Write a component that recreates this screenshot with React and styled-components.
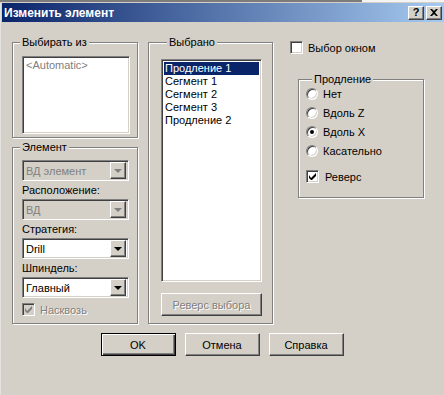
import styled, { createGlobalStyle, css } from "styled-components"

const GlobalStyle = createGlobalStyle`
  html, body {
    margin: 0;
    padding: 0;
    background: #d4d0c8;
  }
  body {
    font-family: "Liberation Sans", Arial, sans-serif;
    font-size: 11px;
    color: #000;
  }
  * { box-sizing: border-box; }
`

const sunken = css`
  border: 1px solid;
  border-color: #808080 #fff #fff #808080;
  box-shadow: inset 1px 1px 0 #404040, inset -1px -1px 0 #d4d0c8;
`
const raised = css`
  border: 1px solid;
  border-color: #fff #404040 #404040 #fff;
  box-shadow: inset -1px -1px 0 #808080;
`

const Window = styled.div`
  width: 444px;
  height: 395px;
  background: #d4d0c8;
  box-shadow: inset 1px 0 0 #e4e2de;
  overflow: hidden;
`
const TopStrip = styled.div`
  height: 3px;
  background:
    linear-gradient(180deg, transparent 0 2px, #d4d0c8 2px),
    linear-gradient(90deg, #7c7c7c 0 362px, #f4f4f4 362px);
`
const TitleBar = styled.div`
  height: 19px;
  margin: 0 0 0 2px;
  padding: 0 2px 0 2px;
  display: flex;
  align-items: center;
  background: linear-gradient(90deg, #0a246a, #a6caf0);
`
const Title = styled.span`
  flex: 1;
  color: #fff;
  font-weight: bold;
  font-size: 12px;
`
const CaptionButton = styled.div`
  width: 16px;
  height: 14px;
  margin-left: ${p => p.$gap || 0}px;
  background: #d4d0c8;
  ${raised};
  display: flex;
  align-items: center;
  justify-content: center;
  font-weight: bold;
  font-size: 11px;
  line-height: 1;
`

const Body = styled.div`
  padding: 20px 0 0 12px;
`
const Columns = styled.div`
  display: flex;
  align-items: flex-start;
`
const Column = styled.div`
  display: flex;
  flex-direction: column;
  margin-left: ${p => p.$left || 0}px;
  margin-top: ${p => p.$top || 0}px;
`
const Frame = styled.div`
  width: ${p => p.$w}px;
  height: ${p => p.$h}px;
  margin-top: ${p => p.$top || 0}px;
  margin-left: ${p => p.$left || 0}px;
  padding-left: ${p => p.$pad || 9}px;
  border: 1px solid #808080;
  box-shadow: inset 1px 1px 0 #fff, 1px 1px 0 #fff;
  display: flex;
  flex-direction: column;
  align-items: flex-start;
`
const Legend = styled.span`
  display: block;
  height: 13px;
  line-height: 13px;
  margin: -7px 0 0 ${p => p.$left}px;
  padding: 0 2px;
  background: #d4d0c8;
  white-space: nowrap;
`
const ListBox = styled.div`
  width: ${p => p.$w}px;
  height: ${p => p.$h}px;
  margin-top: ${p => p.$top}px;
  background: #fff;
  ${sunken};
  padding: 2px;
`
const ListItem = styled.div`
  height: 13px;
  line-height: 13px;
  padding-left: 1px;
  white-space: nowrap;
  color: ${p => (p.$muted ? "#808080" : p.$selected ? "#fff" : "#000")};
  background: ${p => (p.$selected ? "#0a246a" : "transparent")};
`
const FieldLabel = styled.div`
  height: 13px;
  line-height: 13px;
  margin-top: 3px;
`
const Combo = styled.div`
  width: 107px;
  height: 21px;
  margin-top: ${p => p.$top || 2}px;
  ${sunken};
  background: ${p => (p.$disabled ? "#d4d0c8" : "#fff")};
  display: flex;
  align-items: center;
  padding: 2px;
`
const ComboText = styled.span`
  flex: 1;
  padding-left: 1px;
  color: ${p => (p.$disabled ? "#808080" : "#000")};
  white-space: nowrap;
`
const DropButton = styled.div`
  width: 16px;
  height: 17px;
  background: #d4d0c8;
  ${raised};
  display: flex;
  align-items: center;
  justify-content: center;
`
const Arrow = styled.div`
  width: 0;
  height: 0;
  border-left: 4px solid transparent;
  border-right: 4px solid transparent;
  border-top: 4px solid ${p => (p.$disabled ? "#808080" : "#000")};
  margin-top: 1px;
`
const CheckRow = styled.label`
  display: flex;
  align-items: center;
  height: 13px;
  margin-top: ${p => p.$top || 0}px;
  gap: ${p => p.$gap || 5}px;
  color: ${p => (p.$disabled ? "#808080" : "#000")};
  text-shadow: ${p => (p.$disabled ? "1px 1px 0 #fff" : "none")};
  white-space: nowrap;
`
const CheckBox = styled.span`
  width: 13px;
  height: 13px;
  flex: none;
  ${sunken};
  background: ${p => (p.$disabled ? "#d4d0c8" : "#fff")};
  display: flex;
  align-items: center;
  justify-content: center;
`
const Radio = styled.span`
  width: 12px;
  height: 12px;
  flex: none;
  border-radius: 50%;
  border: 1px solid;
  border-color: #808080 #fff #fff #808080;
  box-shadow: inset 1px 1px 0 #404040, inset -1px -1px 0 #d4d0c8;
  background: #fff;
  display: flex;
  align-items: center;
  justify-content: center;
  &::after {
    content: "";
    display: ${p => (p.$checked ? "block" : "none")};
    width: 4px;
    height: 4px;
    border-radius: 50%;
    background: #000;
  }
`
const Button = styled.div`
  width: ${p => p.$w || 75}px;
  height: 23px;
  margin-top: ${p => p.$top || 0}px;
  background: #d4d0c8;
  ${raised};
  ${p =>
    p.$default &&
    css`
      border: 1px solid #000;
      box-shadow: inset 1px 1px 0 #fff, inset -1px -1px 0 #404040, inset -2px -2px 0 #808080;
    `}
  display: flex;
  align-items: center;
  justify-content: center;
  color: ${p => (p.$disabled ? "#808080" : "#000")};
  text-shadow: ${p => (p.$disabled ? "1px 1px 0 #fff" : "none")};
`
const ButtonRow = styled.div`
  display: flex;
  justify-content: center;
  gap: 9px;
  margin: 9px 0 0 -12px;
`

const Check = ({ color = "#000" }) => (
  <svg width="7" height="7" viewBox="0 0 7 7">
    <path d="M0 2v3l2 2h1l4-4V0L2 5z" fill={color} />
  </svg>
)

const Close = () => (
  <svg width="8" height="7" viewBox="0 0 8 7">
    <path d="M0 0h2l2 2 2-2h2L5 3.5 8 7H6L4 5 2 7H0l3-3.5z" fill="#000" />
  </svg>
)

const selected = ["Продление 1", "Сегмент 1", "Сегмент 2", "Сегмент 3", "Продление 2"]
const extension = [
  { label: "Нет" },
  { label: "Вдоль Z" },
  { label: "Вдоль X", checked: true },
  { label: "Касательно" },
]

const App = () => {
  return (
    <Window>
      <GlobalStyle />
      <TopStrip />
      <TitleBar>
        <Title>Изменить элемент</Title>
        <CaptionButton>?</CaptionButton>
        <CaptionButton $gap={2}><Close /></CaptionButton>
      </TitleBar>
      <Body>
        <Columns>
          <Column>
            <Frame $w={126} $h={96}>
              <Legend $left={-2}>Выбирать из</Legend>
              <ListBox $w={108} $h={78} $top={7}>
                <ListItem $muted>&lt;Automatic&gt;</ListItem>
              </ListBox>
            </Frame>
            <Frame $w={126} $h={177} $top={9}>
              <Legend $left={-2}>Элемент</Legend>
              <Combo $disabled $top={6}>
                <ComboText $disabled>ВД элемент</ComboText>
                <DropButton><Arrow $disabled /></DropButton>
              </Combo>
              <FieldLabel>Расположение:</FieldLabel>
              <Combo $disabled>
                <ComboText $disabled>ВД</ComboText>
                <DropButton><Arrow $disabled /></DropButton>
              </Combo>
              <FieldLabel>Стратегия:</FieldLabel>
              <Combo>
                <ComboText>Drill</ComboText>
                <DropButton><Arrow /></DropButton>
              </Combo>
              <FieldLabel>Шпиндель:</FieldLabel>
              <Combo>
                <ComboText>Главный</ComboText>
                <DropButton><Arrow /></DropButton>
              </Combo>
              <CheckRow $disabled $top={5}>
                <CheckBox $disabled><Check color="#808080" /></CheckBox>
                Насквозь
              </CheckRow>
            </Frame>
          </Column>
          <Column $left={10}>
            <Frame $w={125} $h={282} $pad={12}>
              <Legend $left={6}>Выбрано</Legend>
              <ListBox $w={101} $h={223} $top={10}>
                {selected.map((item, i) => (
                  <ListItem key={item} $selected={i === 0}>{item}</ListItem>
                ))}
              </ListBox>
              <Button $w={101} $top={11} $disabled>Реверс выбора</Button>
            </Frame>
          </Column>
          <Column $left={17} $top={-1}>
            <CheckRow>
              <CheckBox />
              Выбор окном
            </CheckRow>
            <Frame $w={126} $h={119} $top={25} $left={8} $pad={7}>
              <Legend $left={6}>Продление</Legend>
              {extension.map((r, i) => (
                <CheckRow key={r.label} $top={i === 0 ? 1 : 6}>
                  <Radio $checked={r.checked} />
                  {r.label}
                </CheckRow>
              ))}
              <CheckRow $top={13} $gap={6}>
                <CheckBox><Check /></CheckBox>
                Реверс
              </CheckRow>
            </Frame>
          </Column>
        </Columns>
        <ButtonRow>
          <Button $default>OK</Button>
          <Button>Отмена</Button>
          <Button>Справка</Button>
        </ButtonRow>
      </Body>
    </Window>
  )
}

export default App
